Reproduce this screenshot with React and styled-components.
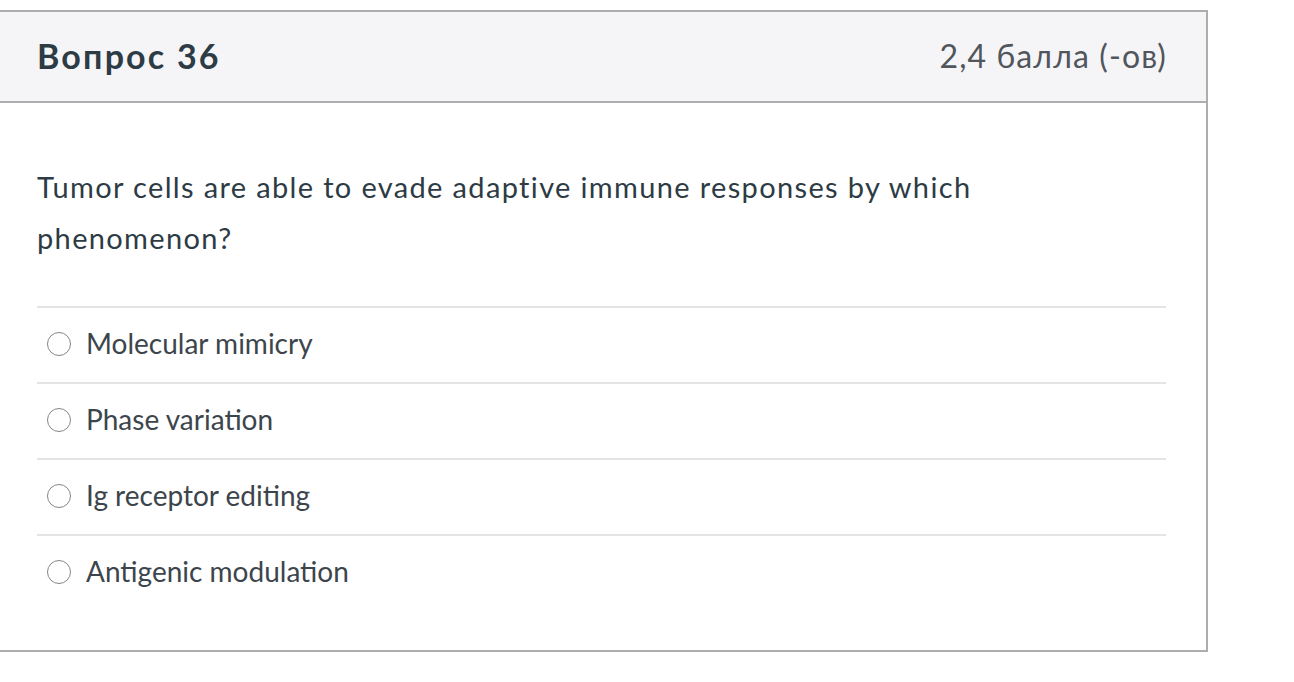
import React from "react";
import styled, { createGlobalStyle } from "styled-components";

const Global = createGlobalStyle`
  html, body { margin: 0; padding: 0; background: #fff; }
  body { font-family: Lato, "Noto Sans", "Liberation Sans", sans-serif; overflow: hidden; }
`;

const Card = styled.section`
  width: 1210px;
  margin: 10px 0 0 -2px;
  border: 2px solid #adadad;
  box-sizing: border-box;
  background: #fff;
`;

const Header = styled.header`
  display: flex;
  align-items: center;
  justify-content: space-between;
  height: 91px;
  padding: 0 40px 2px 37px;
  box-sizing: border-box;
  background: #f5f5f7;
  border-bottom: 2px solid #adadad;
`;

const Title = styled.h2`
  margin: 0;
  font-size: 34px;
  font-weight: 700;
  color: #2d3b45;
  letter-spacing: 2.2px;
`;

const Points = styled.span`
  font-size: 32px;
  font-weight: 400;
  color: #50565c;
  letter-spacing: 1.1px;
  margin-right: -1px;
`;

const Body = styled.div`
  padding: 58px 40px 40px 36px;
`;

const Question = styled.p`
  margin: 0 0 43px 1px;
  font-size: 29px;
  line-height: 51px;
  color: #2d3b45;
  letter-spacing: 1.35px;
`;

const Options = styled.div`
  display: flex;
  flex-direction: column;
  margin-left: 1px;
`;

const Option = styled.label`
  display: flex;
  align-items: center;
  gap: 15px;
  height: 76px;
  box-sizing: border-box;
  padding: 0 0 5px 10px;
  border-top: 2px solid #e4e4e4;
  font-size: 28px;
  color: #3d454c;
`;

const Radio = styled.span`
  width: 24px;
  height: 24px;
  margin-top: 3px;
  border-radius: 50%;
  border: 1.5px solid #858585;
  box-sizing: border-box;
  flex: none;
`;

const options = [
  "Molecular mimicry",
  "Phase variation",
  "Ig receptor editing",
  "Antigenic modulation",
];

export default function App() {
  return (
    <>
      <Global />
      <Card>
        <Header>
          <Title>Вопрос 36</Title>
          <Points>2,4 балла (-ов)</Points>
        </Header>
        <Body>
          <Question>
            Tumor cells are able to evade adaptive immune responses by which
            <br />
            phenomenon?
          </Question>
          <Options>
            {options.map((o) => (
              <Option key={o}>
                <Radio />
                {o}
              </Option>
            ))}
          </Options>
        </Body>
      </Card>
    </>
  );
}
